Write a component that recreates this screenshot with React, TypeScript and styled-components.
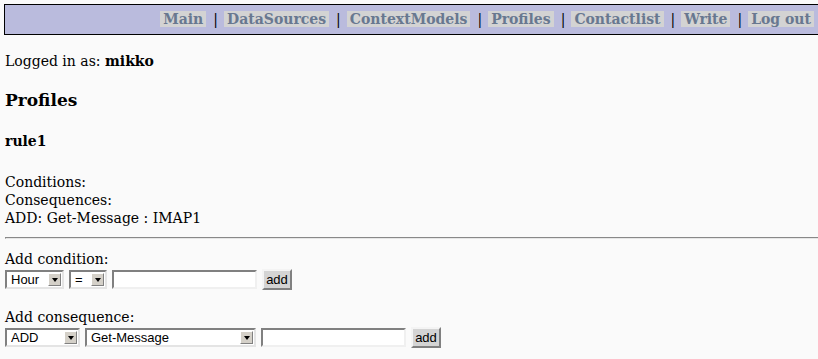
import styled, { createGlobalStyle } from "styled-components";

const GlobalStyle = createGlobalStyle`
  html, body {
    margin: 0;
    padding: 0;
    background: #fafafa;
    overflow: hidden;
  }
  body {
    font-family: "DejaVu Serif", "Liberation Serif", serif;
    font-size: 14px;
    line-height: 18px;
    color: #000;
  }
`;

const Page = styled.div`
  padding: 4px 0 0 4px;
`;

const NavBar = styled.nav`
  width: calc(100% + 20px);
  box-sizing: border-box;
  background: #babbdd;
  border: 1px solid #000;
  padding: 3px 0;
  display: flex;
  justify-content: flex-end;
  align-items: center;
  padding-right: 23px;
`;

const NavItem = styled.a`
  background: #d3d3d3;
  color: #687890;
  font-weight: bold;
  font-size: 14px;
  line-height: 23px;
  padding: 0 3px;
  text-decoration: none;
`;

const Sep = styled.span`
  padding: 0 6px 0 7px;
  color: #000;
`;

const Content = styled.div`
  padding-left: 1px;
`;

const LoggedIn = styled.p`
  margin: 17px 0 0;
`;

const Heading = styled.h3`
  font-size: 17px;
  line-height: 22px;
  margin: 19px 0 0;
`;

const RuleName = styled.h4`
  font-size: 14px;
  margin: 21px 0 0;
`;

const Lines = styled.div`
  margin-top: 23px;
`;

const Rule = styled.hr`
  width: calc(100% + 20px);
  margin: 10px 0 0;
  border: 0;
  border-top: 1px solid #888;
  border-left: 1px solid #888;
  border-bottom: 1px solid #e6e6e6;
  height: 1px;
  box-sizing: border-box;
`;

const FormBlock = styled.form<{ $gap: number }>`
  margin: ${(p) => p.$gap}px 0 0;
`;

const Row = styled.div`
  display: flex;
  align-items: center;
  gap: 5px;
  margin-top: 1px;
`;

const SelectBox = styled.div<{ $w: number }>`
  position: relative;
  width: ${(p) => p.$w}px;
  height: 19px;
  box-sizing: border-box;
  border: 2px solid;
  border-color: #808080 #e4e4e4 #e4e4e4 #808080;
  background: #fff;
  display: flex;
  align-items: center;
`;

const NativeSelect = styled.select`
  appearance: none;
  -webkit-appearance: none;
  border: 0;
  background: transparent;
  font-family: "Liberation Sans", Arial, sans-serif;
  font-size: 13px;
  padding: 0 0 0 4px;
  width: 100%;
  height: 100%;
  outline: none;
  color: #000;
`;

const ArrowButton = styled.span`
  position: absolute;
  right: 1px;
  top: 1px;
  width: 13px;
  height: 13px;
  box-sizing: border-box;
  background: #d4d0c8;
  border: 1px solid;
  border-color: #fff #808080 #808080 #fff;
  display: flex;
  align-items: center;
  justify-content: center;
  pointer-events: none;
`;

const Triangle = styled.span`
  width: 0;
  height: 0;
  border-left: 3px solid transparent;
  border-right: 3px solid transparent;
  border-top: 4px solid #000;
`;

const TextInput = styled.input`
  width: 145px;
  height: 19px;
  box-sizing: border-box;
  border: 2px solid;
  border-color: #808080 #f0f0f0 #f0f0f0 #808080;
  background: #fff;
  padding: 0 2px;
  font-family: "Liberation Sans", Arial, sans-serif;
  font-size: 13px;
`;

const AddButton = styled.button`
  width: 30px;
  height: 21px;
  box-sizing: border-box;
  background: #d4d4d4;
  border: 2px solid;
  border-color: #f4f4f4 #808080 #808080 #f4f4f4;
  font-family: "Liberation Sans", Arial, sans-serif;
  font-size: 13px;
  padding: 0;
  color: #000;
`;

const Select = ({ width, options }: { width: number; options: string[] }) => (
  <SelectBox $w={width}>
    <NativeSelect defaultValue={options[0]}>
      {options.map((o) => (
        <option key={o}>{o}</option>
      ))}
    </NativeSelect>
    <ArrowButton>
      <Triangle />
    </ArrowButton>
  </SelectBox>
);

const links = ["Main", "DataSources", "ContextModels", "Profiles", "Contactlist", "Write", "Log out"];

export default function App() {
  return (
    <Page>
      <GlobalStyle />
      <NavBar>
        {links.map((l, i) => (
          <span key={l}>
            {i > 0 && <Sep>|</Sep>}
            <NavItem href="#">{l}</NavItem>
          </span>
        ))}
      </NavBar>
      <Content>
        <LoggedIn>
          Logged in as: <b>mikko</b>
        </LoggedIn>
        <Heading>Profiles</Heading>
        <RuleName>rule1</RuleName>
        <Lines>
          Conditions:
          <br />
          Consequences:
          <br />
          ADD: Get-Message : IMAP1
        </Lines>
        <Rule />
        <FormBlock $gap={11}>
          Add condition:
          <Row>
            <Select width={59} options={["Hour", "Day", "Location"]} />
            <Select width={38} options={["=", "<", ">"]} />
            <TextInput />
            <AddButton type="button">add</AddButton>
          </Row>
        </FormBlock>
        <FormBlock $gap={18}>
          Add consequence:
          <Row>
            <Select width={75} options={["ADD", "REMOVE"]} />
            <Select width={171} options={["Get-Message", "Send-Message"]} />
            <TextInput />
            <AddButton type="button">add</AddButton>
          </Row>
        </FormBlock>
      </Content>
    </Page>
  );
}
